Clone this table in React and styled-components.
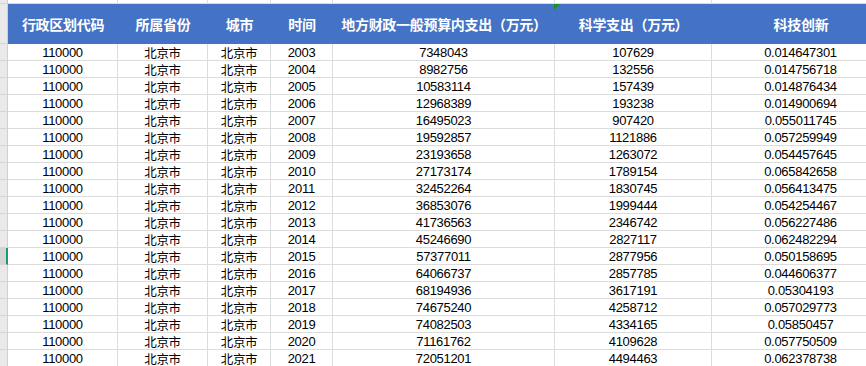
import styled, { createGlobalStyle } from "styled-components";

const GlobalStyle = createGlobalStyle`
  html, body {
    margin: 0;
    padding: 0;
    background: #ffffff;
    overflow: hidden;
  }
`;

const COLS = "8px 110px 90px 63px 62px 222px 157px 178px";

const headers = [
  "行政区划代码",
  "所属省份",
  "城市",
  "时间",
  "地方财政一般预算内支出（万元）",
  "科学支出（万元）",
  "科技创新",
];

const data = [
  [2003, 7348043, 107629, "0.014647301"],
  [2004, 8982756, 132556, "0.014756718"],
  [2005, 10583114, 157439, "0.014876434"],
  [2006, 12968389, 193238, "0.014900694"],
  [2007, 16495023, 907420, "0.055011745"],
  [2008, 19592857, 1121886, "0.057259949"],
  [2009, 23193658, 1263072, "0.054457645"],
  [2010, 27173174, 1789154, "0.065842658"],
  [2011, 32452264, 1830745, "0.056413475"],
  [2012, 36853076, 1999444, "0.054254467"],
  [2013, 41736563, 2346742, "0.056227486"],
  [2014, 45246690, 2827117, "0.062482294"],
  [2015, 57377011, 2877956, "0.050158695"],
  [2016, 64066737, 2857785, "0.044606377"],
  [2017, 68194936, 3617191, "0.05304193"],
  [2018, 74675240, 4258712, "0.057029773"],
  [2019, 74082503, 4334165, "0.05850457"],
  [2020, 71161762, 4109628, "0.057750509"],
  [2021, 72051201, 4494463, "0.062378738"],
];

export default function App() {
  return (
    <>
      <GlobalStyle />
      <Sheet>
        <Row $h={4}>
          <RowHead />
          {headers.map((_, i) => (
            <Cell key={i} />
          ))}
        </Row>
        <Row $h={40}>
          <RowHead />
          {headers.map((h, i) => (
            <HeadCell key={h}>
              {i === 5 && <Marker />}
              {h}
            </HeadCell>
          ))}
        </Row>
        {data.map(([year, budget, sci, tech]) => (
          <Row key={year} $h={17}>
            <RowHead $active={year === 2015} />
            <Cell>110000</Cell>
            <Cell $cjk>北京市</Cell>
            <Cell $cjk>北京市</Cell>
            <Cell>{year}</Cell>
            <Cell>{budget}</Cell>
            <Cell>{sci}</Cell>
            <Cell>{tech}</Cell>
          </Row>
        ))}
      </Sheet>
    </>
  );
}

const Sheet = styled.div`
  width: 866px;
  height: 366px;
  overflow: hidden;
  font-family: "Liberation Sans", "Noto Sans CJK SC", sans-serif;
`;

const Row = styled.div`
  display: grid;
  grid-template-columns: ${COLS};
  height: ${(p) => p.$h}px;
`;

const RowHead = styled.div`
  box-sizing: border-box;
  background: ${(p) => (p.$active ? "#d4d4d4" : "#e9e9e9")};
  border-right: ${(p) => (p.$active ? "2px solid #1e9b6b" : "1px solid #d0d0d0")};
  border-bottom: 1px solid #d6d6d6;
`;

const Cell = styled.div`
  box-sizing: border-box;
  display: flex;
  align-items: center;
  justify-content: center;
  border-right: 1px solid #dcdcdc;
  border-bottom: 1px solid #dcdcdc;
  font-size: ${(p) => (p.$cjk ? "12.5px" : "13px")};
  letter-spacing: -0.3px;
  color: #000;
  white-space: nowrap;
  overflow: hidden;
  padding-top: 1px;
`;

const HeadCell = styled.div`
  position: relative;
  display: flex;
  align-items: center;
  justify-content: center;
  background: #4472c4;
  color: #ffffff;
  font-family: "Noto Sans CJK SC", sans-serif;
  font-weight: 700;
  font-size: 14px;
  letter-spacing: -0.3px;
  white-space: nowrap;
`;

const Marker = styled.span`
  position: absolute;
  top: 0;
  left: -1px;
  width: 0;
  height: 0;
  border-top: 6px solid #1a8f22;
  border-right: 6px solid transparent;
`;
